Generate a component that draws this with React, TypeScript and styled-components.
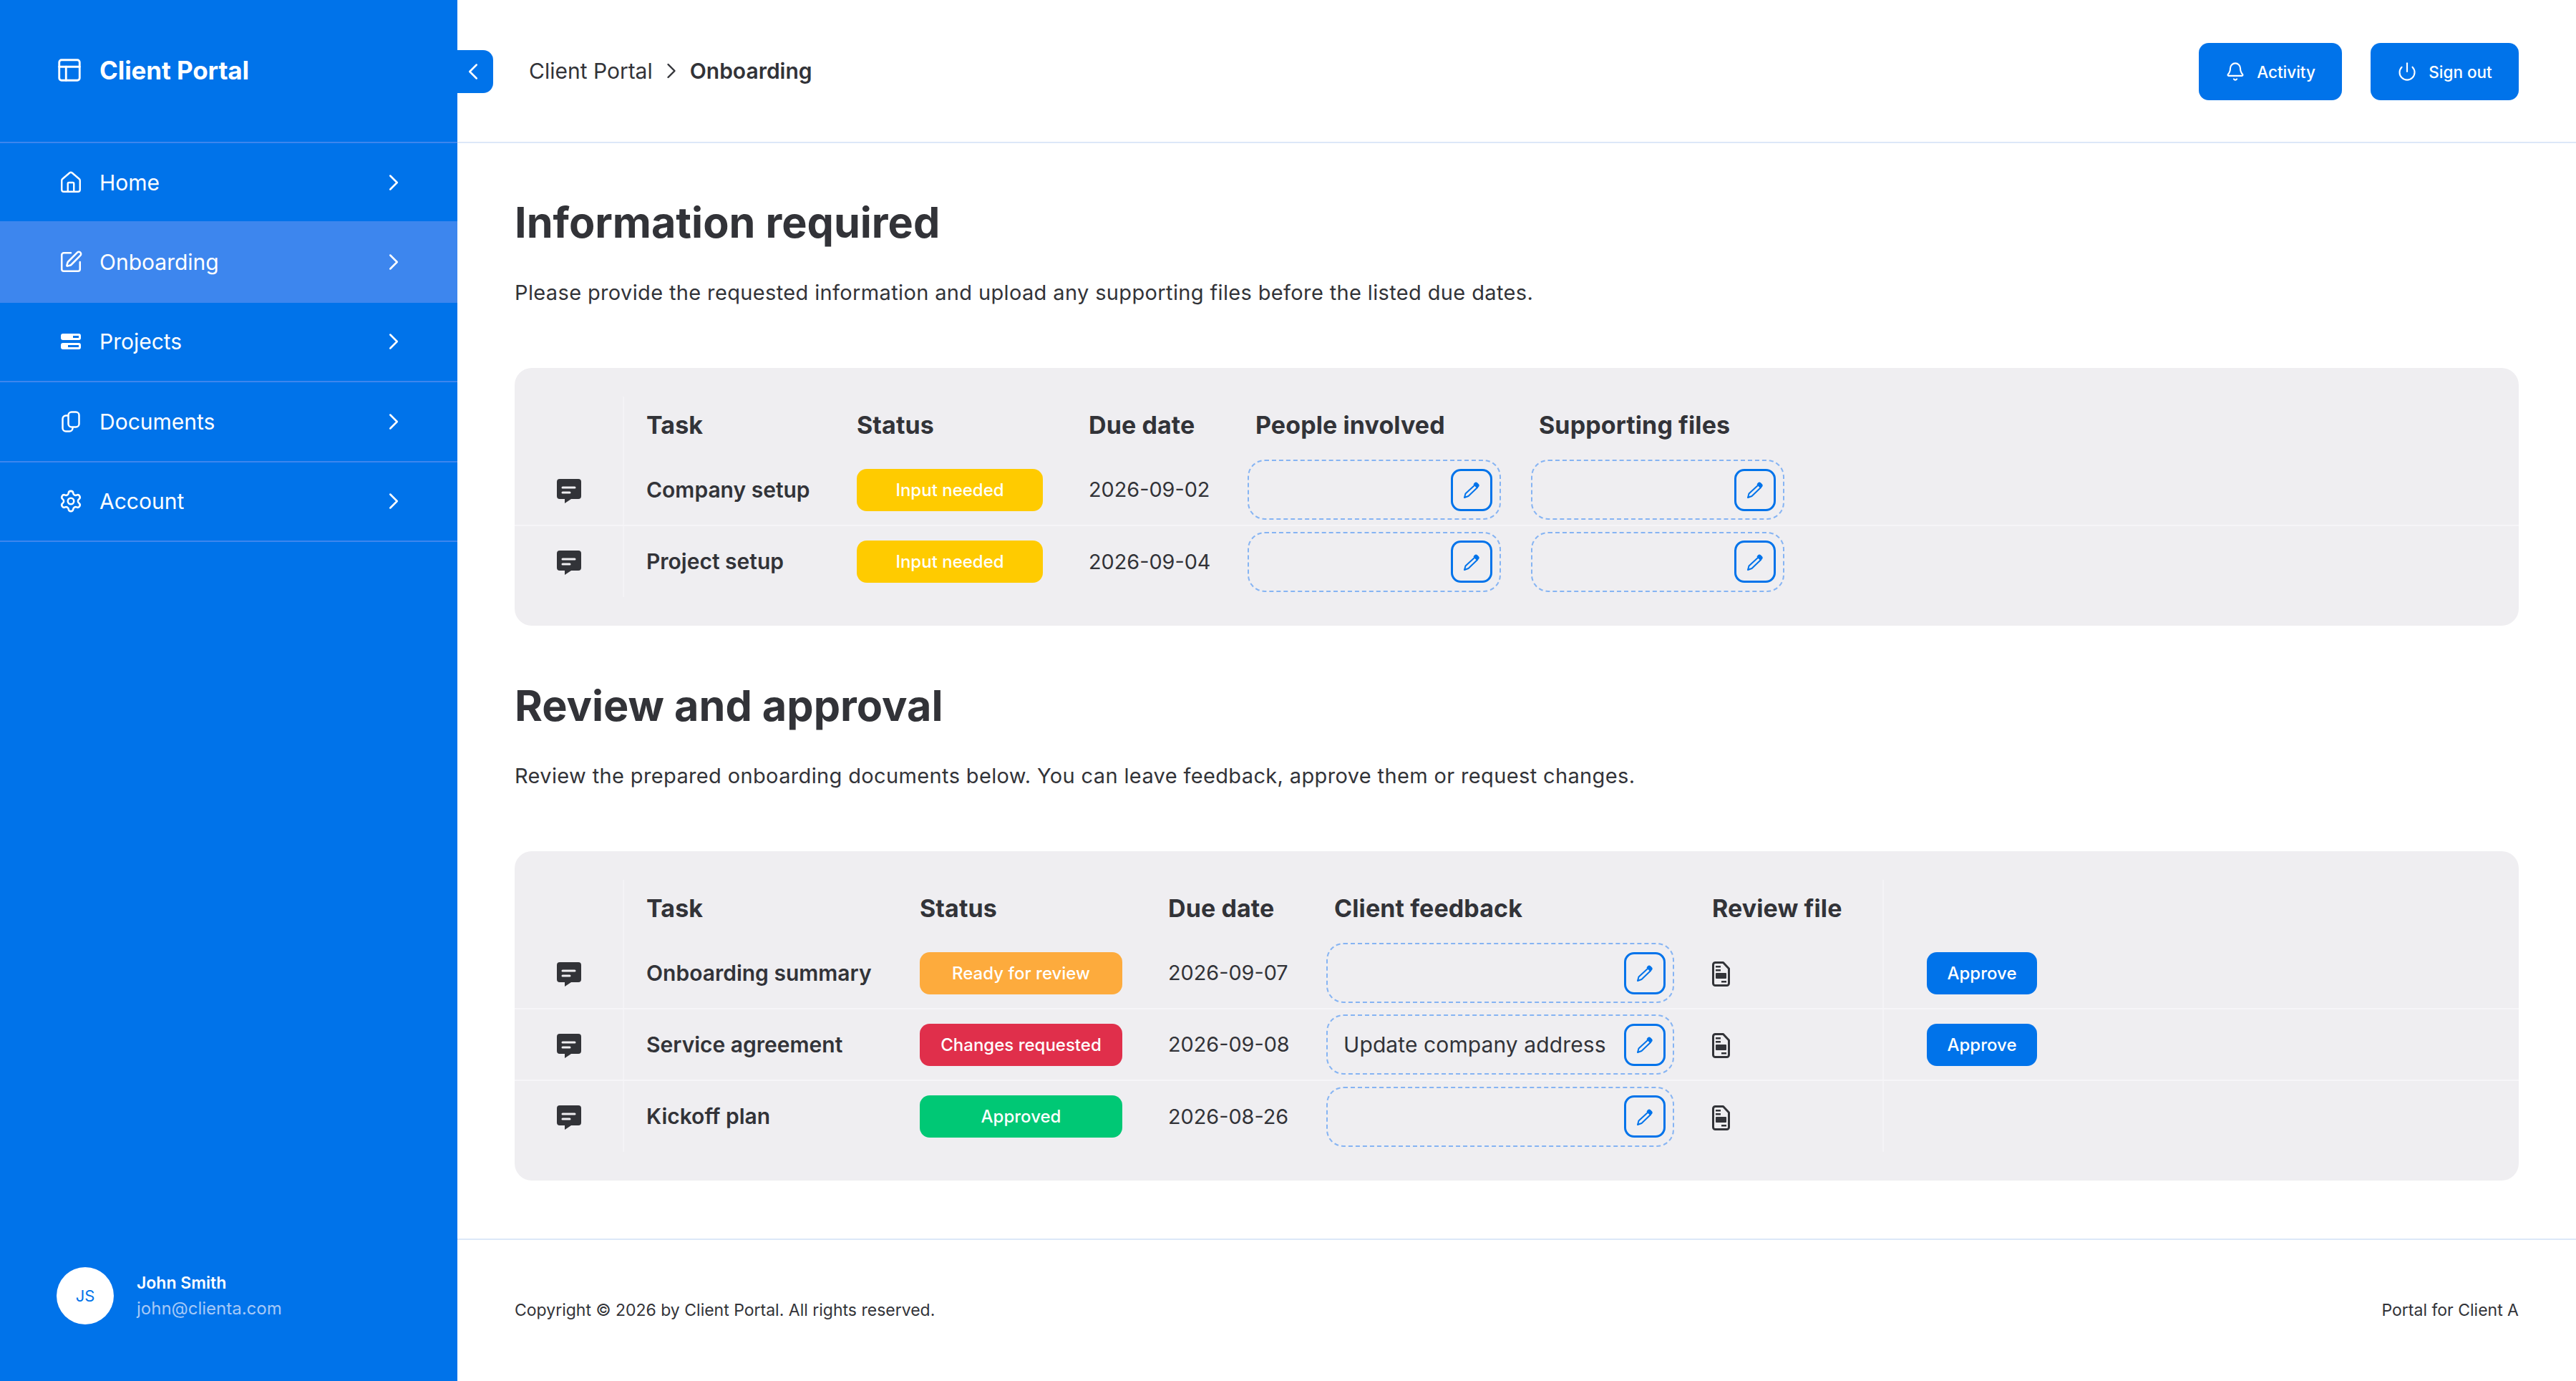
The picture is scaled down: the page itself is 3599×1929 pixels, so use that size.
import React from 'react'
import styled, { createGlobalStyle } from 'styled-components'
import { Bell, ChevronLeft, ChevronRight, House, PanelsTopLeft, Power, Settings, SquarePen } from 'lucide-react'

const BLUE = '#0073ea'
const INK = '#323338'

const GlobalStyle = createGlobalStyle`
  html, body {
    margin: 0;
    padding: 0;
    background: #fff;
  }
  body {
    font-family: 'Inter', 'Liberation Sans', sans-serif;
    color: ${INK};
  }
  * {
    box-sizing: border-box;
  }
`

const Page = styled.div`
  display: flex;
  min-height: 1929px;
`

const Sidebar = styled.aside`
  width: 639px;
  flex: none;
  display: flex;
  flex-direction: column;
  background: ${BLUE};
  color: #fff;
`

const Brand = styled.div`
  height: 200px;
  display: flex;
  align-items: center;
  gap: 23px;
  padding: 0 0 2px 78px;
  border-bottom: 2px solid #3d86ee;
  font-size: 35px;
  font-weight: 700;
  letter-spacing: -0.1px;
`

const Nav = styled.nav`
  display: flex;
  flex-direction: column;
  flex: 1;
`

const NavItem = styled.a<{ $active?: boolean }>`
  height: 111.4px;
  display: flex;
  align-items: center;
  padding: 0 70px 0 79px;
  border-bottom: 2px solid #3d86ee;
  background: ${(p) => (p.$active ? '#3d86ee' : 'transparent')};
  font-size: 30px;
  font-weight: 400;
`

const NavIcon = styled.span`
  width: 40px;
  height: 40px;
  margin-right: 20px;
  display: flex;
  align-items: center;
  justify-content: center;
`

const NavLabel = styled.span`
  flex: 1;
`

const UserBlock = styled.div`
  display: flex;
  align-items: center;
  gap: 32px;
  padding: 0 0 79px 79px;
`

const Avatar = styled.div`
  width: 80px;
  height: 80px;
  border-radius: 50%;
  background: #fff;
  color: ${BLUE};
  display: flex;
  align-items: center;
  justify-content: center;
  font-size: 22px;
`

const UserText = styled.div`
  display: flex;
  flex-direction: column;
  gap: 6px;
`

const UserName = styled.div`
  font-size: 23px;
  line-height: 30px;
  font-weight: 600;
`

const UserMail = styled.div`
  font-size: 24px;
  line-height: 30px;
  color: #a6c9f7;
`

const Main = styled.main`
  flex: 1;
  min-width: 0;
  display: flex;
  flex-direction: column;
`

const Topbar = styled.header`
  position: relative;
  height: 200px;
  display: flex;
  align-items: center;
  justify-content: space-between;
  padding: 0 80px 0 100px;
  border-bottom: 2px solid #dce8f8;
`

const Collapse = styled.button`
  position: absolute;
  left: 0;
  top: 70px;
  width: 50px;
  height: 60px;
  padding: 0 6px 0 0;
  border: 0;
  border-radius: 0 14px 14px 0;
  background: ${BLUE};
  color: #fff;
  display: flex;
  align-items: center;
  justify-content: center;
`

const Crumbs = styled.div`
  display: flex;
  align-items: center;
  gap: 8px;
  font-size: 30px;
`

const CrumbCurrent = styled.span`
  font-weight: 600;
`

const TopActions = styled.div`
  display: flex;
  gap: 40px;
  margin-top: 2px;
`

const TopButton = styled.button<{ $width: number }>`
  width: ${(p) => p.$width}px;
  height: 80px;
  border: 0;
  border-radius: 14px;
  background: ${BLUE};
  color: #fff;
  display: flex;
  align-items: center;
  justify-content: center;
  gap: 16px;
  font-family: inherit;
  font-size: 22.5px;
  font-weight: 500;
`

const Content = styled.div`
  padding: 71px 80px 81px 80px;
  display: flex;
  flex-direction: column;
`

const Title = styled.h1<{ $spaced?: boolean }>`
  margin: ${(p) => (p.$spaced ? '72px' : '0')} 0 0;
  font-size: 59.3px;
  line-height: 80px;
  font-weight: 700;
`

const Lead = styled.p`
  margin: 36px 0 83px;
  font-size: 29px;
  line-height: 44px;
  letter-spacing: 0.36px;
`

const Card = styled.div`
  padding: 40px 0;
  border-radius: 24px;
  background: #efeef1;
`

const Row = styled.div<{ $columns: string; $head?: boolean }>`
  display: grid;
  grid-template-columns: ${(p) => p.$columns};
  height: ${(p) => (p.$head ? '81px' : '100px')};
  border-bottom: ${(p) => (p.$head ? '0' : '2px solid #f6f5f8')};

  &:last-child {
    height: 99px;
    border-bottom: 0;
  }
`

const Cell = styled.div<{ $inset?: number; $divided?: boolean; $centered?: boolean }>`
  display: flex;
  align-items: center;
  min-width: 0;
  padding-left: ${(p) => p.$inset ?? 0}px;
  justify-content: ${(p) => (p.$centered ? 'center' : 'flex-start')};
  border-right: ${(p) => (p.$divided ? '2px solid #f4f3f6' : '0')};
`

const HeadText = styled.span`
  margin-bottom: 2px;
  font-size: 34px;
  font-weight: 700;
  letter-spacing: 0.1px;
  white-space: nowrap;
`

const TaskName = styled.span`
  margin-bottom: 1px;
  font-size: 30px;
  font-weight: 600;
  white-space: nowrap;
`

const DateText = styled.span`
  margin-bottom: 1px;
  font-size: 28.8px;
  white-space: nowrap;
`

const Badge = styled.div<{ $tone: string; $width: number }>`
  width: ${(p) => p.$width}px;
  height: 59px;
  border-radius: 14px;
  background: ${(p) => p.$tone};
  color: #fff;
  display: flex;
  align-items: center;
  justify-content: center;
  font-size: 24px;
  font-weight: 500;
`

const EditBox = styled.div<{ $width: number }>`
  width: ${(p) => p.$width}px;
  height: 84px;
  padding: 0 10px 0 22px;
  border: 2px dashed #86b4f3;
  border-radius: 24px;
  display: flex;
  align-items: center;
  justify-content: space-between;
`

const BoxText = styled.span`
  font-size: 30px;
  letter-spacing: 0.1px;
  white-space: nowrap;
`

const EditButton = styled.button`
  width: 58px;
  height: 59px;
  margin-left: auto;
  padding: 0;
  flex: none;
  border: 3px solid ${BLUE};
  border-radius: 14px;
  background: transparent;
  display: flex;
  align-items: center;
  justify-content: center;
`

const ApproveButton = styled.button`
  width: 154px;
  height: 59px;
  border: 0;
  border-radius: 14px;
  background: ${BLUE};
  color: #fff;
  font-family: inherit;
  font-size: 24px;
  font-weight: 500;
`

const Footer = styled.footer`
  height: 198px;
  display: flex;
  align-items: center;
  justify-content: space-between;
  padding: 0 80px;
  border-top: 2px solid #dce8f8;
  font-size: 23px;
`

const RowGlyph = styled.svg`
  margin-top: 3px;
`

const CommentIcon = () => (
  <RowGlyph width="34" height="34" viewBox="0 0 34 34">
    <path
      fill="#323338"
      fillRule="evenodd"
      d="M4 0h26a4 4 0 0 1 4 4v20a4 4 0 0 1-4 4H20l-9 6v-6H4a4 4 0 0 1-4-4V4a4 4 0 0 1 4-4zM8 10.500a1.500 1.500 0 0 0 0 3h17a1.500 1.500 0 0 0 0-3zM8 17.500a1.500 1.500 0 0 0 0 3h10a1.500 1.500 0 0 0 0-3z"
    />
  </RowGlyph>
)

const PenIcon = () => (
  <svg width="24" height="24" viewBox="0 0 24 24" fill="none">
    <path d="M16.500 5.500l3.500 3.500L7.500 21 2 23l1.500-5.500z" stroke={BLUE} strokeWidth="2" strokeLinejoin="round" />
    <path d="M16 2.500a3 3 0 0 1 4.200 0l1.500 1.500a3 3 0 0 1 0 4.200L20 10l-5.500-5.500z" fill={BLUE} />
  </svg>
)

const FileIcon = () => (
  <RowGlyph width="25" height="35" viewBox="0 0 25 35" fill="none">
    <path
      d="M4 1.500h11.500L23.500 10v20.500a3 3 0 0 1-3 3h-16a3 3 0 0 1-3-3v-26a3 3 0 0 1 3-3z"
      stroke="#323338"
      strokeWidth="3"
      strokeLinejoin="round"
    />
    <rect x="5" y="6" width="7" height="2.500" fill="#323338" />
    <rect x="5" y="11" width="7" height="2.500" fill="#323338" />
    <rect x="5" y="16" width="15" height="8" rx="1" fill="#323338" />
    <rect x="13" y="27" width="7" height="2.500" fill="#323338" />
  </RowGlyph>
)

const ProjectsIcon = () => (
  <svg width="28" height="22" viewBox="0 0 28 22">
    <path
      fill="#fff"
      fillRule="evenodd"
      d="M3 0h22a3 3 0 0 1 3 3v3a3 3 0 0 1-3 3H3a3 3 0 0 1-3-3V3a3 3 0 0 1 3-3zM17 3v3h8V3zM3 13h22a3 3 0 0 1 3 3v3a3 3 0 0 1-3 3H3a3 3 0 0 1-3-3v-3a3 3 0 0 1 3-3zM10 16v3h15v-3z"
    />
  </svg>
)

const DocumentsIcon = () => (
  <svg width="26" height="30" viewBox="0 0 26 30" fill="none" stroke="#fff" strokeWidth="2.500" strokeLinecap="round">
    <rect x="9.500" y="1.500" width="15" height="21" rx="4.500" />
    <path d="M9 6.500H6a4.500 4.500 0 0 0-4.500 4.500v13A4.500 4.500 0 0 0 6 28.500h5a4.500 4.500 0 0 0 4.500-4.500" />
  </svg>
)

const Comment = () => (
  <Cell $divided $centered>
    <CommentIcon />
  </Cell>
)

const Edit = ({ width, text }: { width: number; text?: string }) => (
  <EditBox $width={width}>
    {text && <BoxText>{text}</BoxText>}
    <EditButton>
      <PenIcon />
    </EditButton>
  </EditBox>
)

const infoColumns = '153px 325px 324px 222px 396px 1fr'
const reviewColumns = '153px 413px 347px 221px 539px 240px 1fr'

const infoRows = [
  { task: 'Company setup', due: '2026-09-02' },
  { task: 'Project setup', due: '2026-09-04' },
]

const reviewRows = [
  { task: 'Onboarding summary', status: 'Ready for review', tone: '#fdab3d', due: '2026-09-07', approve: true },
  { task: 'Service agreement', status: 'Changes requested', tone: '#e02f4b', due: '2026-09-08', note: 'Update company address', approve: true },
  { task: 'Kickoff plan', status: 'Approved', tone: '#00c875', due: '2026-08-26' },
]

const navItems = [
  { label: 'Home', icon: <House size={34} strokeWidth={1.7} /> },
  { label: 'Onboarding', icon: <SquarePen size={34} strokeWidth={1.8} />, active: true },
  { label: 'Projects', icon: <ProjectsIcon /> },
  { label: 'Documents', icon: <DocumentsIcon /> },
  { label: 'Account', icon: <Settings size={34} strokeWidth={1.8} /> },
]

export default function App() {
  return (
    <Page>
      <GlobalStyle />
      <Sidebar>
        <Brand>
          <PanelsTopLeft size={38} strokeWidth={1.8} />
          Client Portal
        </Brand>
        <Nav>
          {navItems.map((item) => (
            <NavItem key={item.label} $active={item.active}>
              <NavIcon>{item.icon}</NavIcon>
              <NavLabel>{item.label}</NavLabel>
              <ChevronRight size={38} strokeWidth={1.6} />
            </NavItem>
          ))}
        </Nav>
        <UserBlock>
          <Avatar>JS</Avatar>
          <UserText>
            <UserName>John Smith</UserName>
            <UserMail>john@clienta.com</UserMail>
          </UserText>
        </UserBlock>
      </Sidebar>
      <Main>
        <Topbar>
          <Collapse>
            <ChevronLeft size={38} strokeWidth={1.6} />
          </Collapse>
          <Crumbs>
            Client Portal
            <ChevronRight size={36} strokeWidth={1.6} />
            <CrumbCurrent>Onboarding</CrumbCurrent>
          </Crumbs>
          <TopActions>
            <TopButton $width={200}>
              <Bell size={28} strokeWidth={1.8} />
              Activity
            </TopButton>
            <TopButton $width={207}>
              <Power size={28} strokeWidth={1.8} />
              Sign out
            </TopButton>
          </TopActions>
        </Topbar>
        <Content>
          <Title>Information required</Title>
          <Lead>Please provide the requested information and upload any supporting files before the listed due dates.</Lead>
          <Card>
            <Row $columns={infoColumns} $head>
              <Cell $divided />
              <Cell $inset={31}><HeadText>Task</HeadText></Cell>
              <Cell><HeadText>Status</HeadText></Cell>
              <Cell><HeadText>Due date</HeadText></Cell>
              <Cell $inset={11}><HeadText>People involved</HeadText></Cell>
              <Cell $inset={11}><HeadText>Supporting files</HeadText></Cell>
            </Row>
            {infoRows.map((row) => (
              <Row key={row.task} $columns={infoColumns}>
                <Comment />
                <Cell $inset={31}><TaskName>{row.task}</TaskName></Cell>
                <Cell><Badge $tone="#ffcb00" $width={260}>Input needed</Badge></Cell>
                <Cell><DateText>{row.due}</DateText></Cell>
                <Cell><Edit width={354} /></Cell>
                <Cell><Edit width={354} /></Cell>
              </Row>
            ))}
          </Card>
          <Title $spaced>Review and approval</Title>
          <Lead>Review the prepared onboarding documents below. You can leave feedback, approve them or request changes.</Lead>
          <Card>
            <Row $columns={reviewColumns} $head>
              <Cell $divided />
              <Cell $inset={31}><HeadText>Task</HeadText></Cell>
              <Cell><HeadText>Status</HeadText></Cell>
              <Cell><HeadText>Due date</HeadText></Cell>
              <Cell $inset={11}><HeadText>Client feedback</HeadText></Cell>
              <Cell $divided><HeadText>Review file</HeadText></Cell>
              <Cell />
            </Row>
            {reviewRows.map((row) => (
              <Row key={row.task} $columns={reviewColumns}>
                <Comment />
                <Cell $inset={31}><TaskName>{row.task}</TaskName></Cell>
                <Cell><Badge $tone={row.tone} $width={283}>{row.status}</Badge></Cell>
                <Cell><DateText>{row.due}</DateText></Cell>
                <Cell><Edit width={486} text={row.note} /></Cell>
                <Cell $divided><FileIcon /></Cell>
                <Cell $inset={60}>{row.approve && <ApproveButton>Approve</ApproveButton>}</Cell>
              </Row>
            ))}
          </Card>
        </Content>
        <Footer>
          <span>Copyright © 2026 by Client Portal. All rights reserved.</span>
          <span>Portal for Client A</span>
        </Footer>
      </Main>
    </Page>
  )
}
